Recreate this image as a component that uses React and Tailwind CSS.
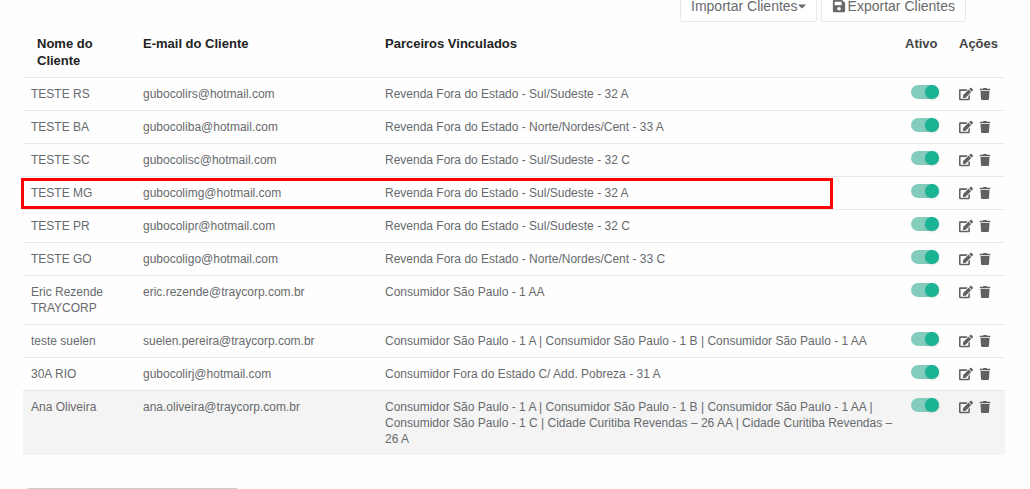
import { useState } from 'react';
import { FaCaretDown, FaEdit, FaSave, FaTrash } from 'react-icons/fa';

const clientes = [
  { nome: 'TESTE RS', email: 'gubocolirs@hotmail.com', parceiros: ['Revenda Fora do Estado - Sul/Sudeste - 32 A'] },
  { nome: 'TESTE BA', email: 'gubocoliba@hotmail.com', parceiros: ['Revenda Fora do Estado - Norte/Nordes/Cent - 33 A'] },
  { nome: 'TESTE SC', email: 'gubocolisc@hotmail.com', parceiros: ['Revenda Fora do Estado - Sul/Sudeste - 32 C'] },
  { nome: 'TESTE MG', email: 'gubocolimg@hotmail.com', parceiros: ['Revenda Fora do Estado - Sul/Sudeste - 32 A'], destaque: true },
  { nome: 'TESTE PR', email: 'gubocolipr@hotmail.com', parceiros: ['Revenda Fora do Estado - Sul/Sudeste - 32 C'] },
  { nome: 'TESTE GO', email: 'gubocoligo@hotmail.com', parceiros: ['Revenda Fora do Estado - Norte/Nordes/Cent - 33 C'] },
  { nome: 'Eric Rezende TRAYCORP', email: 'eric.rezende@traycorp.com.br', parceiros: ['Consumidor São Paulo - 1 AA'] },
  {
    nome: 'teste suelen',
    email: 'suelen.pereira@traycorp.com.br',
    parceiros: ['Consumidor São Paulo - 1 A', 'Consumidor São Paulo - 1 B', 'Consumidor São Paulo - 1 AA'],
  },
  { nome: '30A RIO', email: 'gubocolirj@hotmail.com', parceiros: ['Consumidor Fora do Estado C/ Add. Pobreza - 31 A'] },
  {
    nome: 'Ana Oliveira',
    email: 'ana.oliveira@traycorp.com.br',
    parceiros: [
      'Consumidor São Paulo - 1 A',
      'Consumidor São Paulo - 1 B',
      'Consumidor São Paulo - 1 AA',
      'Consumidor São Paulo - 1 C',
      'Cidade Curitiba Revendas – 26 AA',
      'Cidade Curitiba Revendas – 26 A',
    ],
    selecionado: true,
  },
];

const Toggle = ({ label }) => {
  const [ativo, setAtivo] = useState(true);

  return (
    <label className="relative block w-7 h-3.5 cursor-pointer">
      <input
        type="checkbox"
        aria-label={label}
        checked={ativo}
        onChange={() => setAtivo(!ativo)}
        className="peer sr-only"
      />
      <span className="block w-full h-full rounded-full bg-gray-300 peer-checked:bg-[#84cdbd]" />
      <span className="absolute top-0 left-0 size-3.5 rounded-full bg-gray-500 shadow peer-checked:left-3.5 peer-checked:bg-[#1ab394]" />
    </label>
  );
};

const ClienteRow = ({ cliente }) => (
  <tr className={`relative border-t border-[#e7eaec] align-top ${cliente.selecionado ? 'bg-[#f4f4f4]' : ''}`}>
    <td className="p-2">
      {cliente.nome}
      {cliente.destaque && (
        <span className="absolute -left-0.5 right-[172px] top-0 h-[31px] border-3 border-[#fe0000] pointer-events-none" />
      )}
    </td>
    <td className="p-2">{cliente.email}</td>
    <td className="py-2 pl-2">{cliente.parceiros.join(' | ')}</td>
    <td className="pt-[7px] pl-3.5">
      <Toggle label={`Ativo: ${cliente.nome}`} />
    </td>
    <td className="p-2">
      <div className="flex items-center gap-1.5 h-4 text-[#5f6163]">
        <button type="button" aria-label={`Editar ${cliente.nome}`}>
          <FaEdit className="size-3.5" />
        </button>
        <button type="button" aria-label={`Excluir ${cliente.nome}`}>
          <FaTrash className="size-3" />
        </button>
      </div>
    </td>
  </tr>
);

const App = () => (
  <main className="h-screen overflow-hidden bg-[#fefefe] pl-[23px] pr-[25px] font-['Liberation_Sans',Arial,sans-serif] text-[#676a6c]">
    {/* Toolbar */}
    <div className="flex justify-end gap-1 pr-[39px] -mt-2.5 text-sm">
      <button type="button" className="flex items-center h-8 px-2.5 rounded-xs border border-[#e7eaec] bg-white">
        Importar Clientes
        <FaCaretDown className="w-2 h-3" />
      </button>
      <button type="button" className="flex items-center gap-0.5 h-8 px-2.5 rounded-xs border border-[#e7eaec] bg-white">
        <FaSave className="size-3.5" />
        Exportar Clientes
      </button>
    </div>

    {/* Clients table */}
    <table className="w-full table-fixed border-collapse mt-[5px] text-xs leading-4">
      <colgroup>
        <col className="w-28" />
        <col className="w-[242px]" />
        <col />
        <col className="w-[54px]" />
        <col className="w-[54px]" />
      </colgroup>
      <thead>
        <tr className="text-left align-top text-[13px] leading-[17px] text-[#222]">
          <th className="pt-2 pb-2 pl-3.5">Nome do Cliente</th>
          <th className="p-2">E-mail do Cliente</th>
          <th className="p-2">Parceiros Vinculados</th>
          <th className="p-2 text-[#444]">Ativo</th>
          <th className="p-2 text-[#444]">Ações</th>
        </tr>
      </thead>
      <tbody>
        {clientes.map((cliente) => (
          <ClienteRow key={cliente.email} cliente={cliente} />
        ))}
      </tbody>
    </table>

    <input
      type="text"
      aria-label="Buscar"
      className="block mt-[33px] ml-0.5 w-[215px] h-8 rounded-sm border border-[#ccc] bg-white px-2 text-xs"
    />
  </main>
);

export default App;
